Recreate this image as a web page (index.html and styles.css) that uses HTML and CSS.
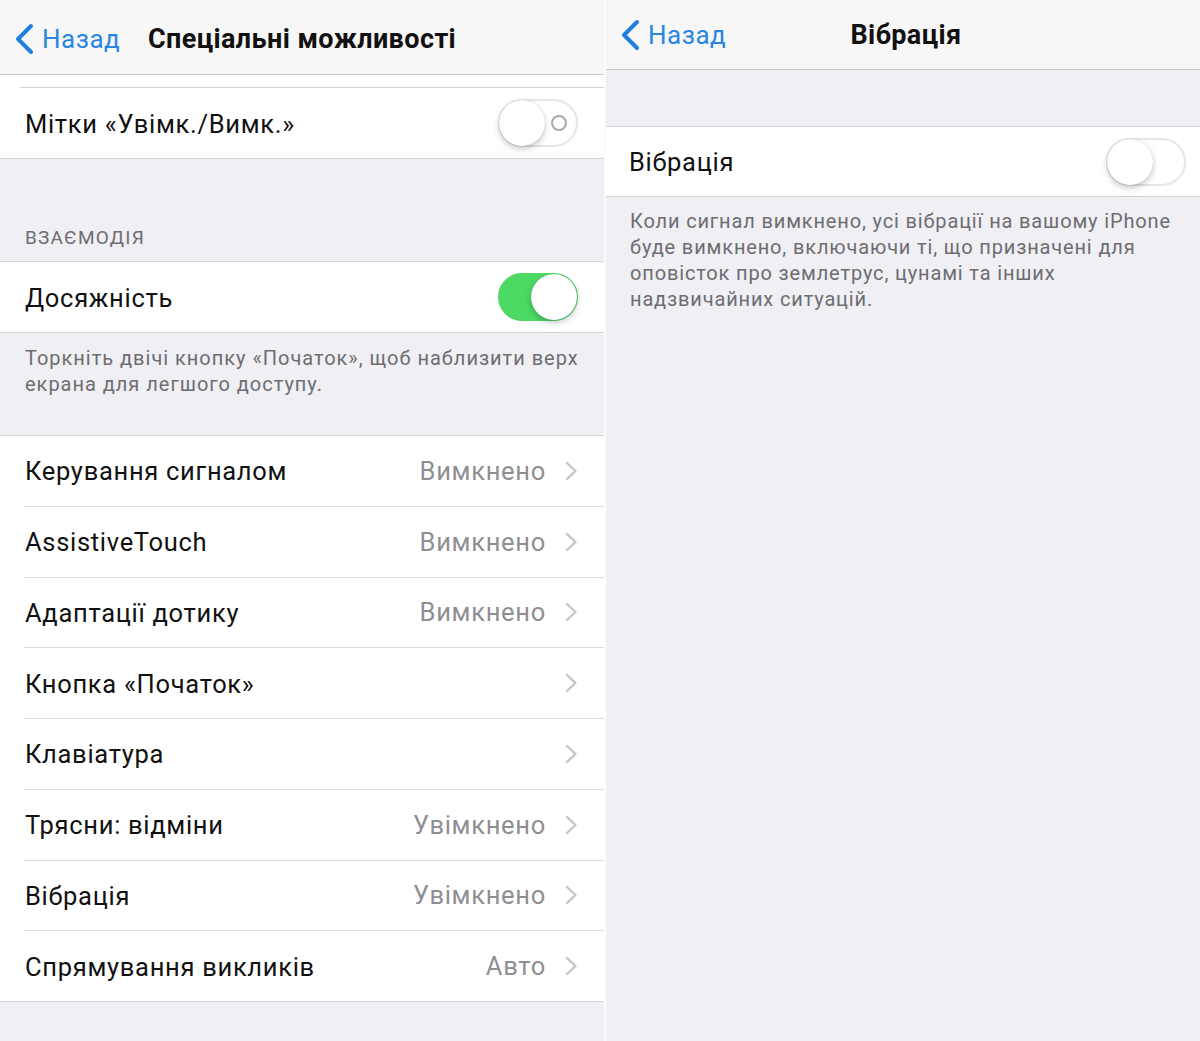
FILE: index.html
```html
<!DOCTYPE html>
<html lang="uk">
<head>
<meta charset="utf-8">
<title>Спеціальні можливості</title>
<link rel="stylesheet" href="styles.css">
</head>
<body>
<div class="screen">
  <section class="panel panel-left">
    <header class="nav nav-left">
      <a class="back">
        <svg class="back-chevron" width="20" height="32" viewBox="0 0 20 32"><path d="M17 3 L4 16 L17 29" fill="none" stroke="#1f7fe0" stroke-width="4" stroke-linecap="round" stroke-linejoin="round"/></svg>
        <span>Назад</span>
      </a>
      <h1 class="title">Спеціальні можливості</h1>
      <span></span>
    </header>

    <div class="group group-top">
      <div class="peek"></div>
      <div class="row">
        <div class="row-body">
          <span class="label">Мітки «Увімк./Вимк.»</span>
          <span class="switch">
            <span class="knob"></span>
            <span class="off-mark"></span>
          </span>
        </div>
      </div>
    </div>

    <div class="section-header">ВЗАЄМОДІЯ</div>

    <div class="group">
      <div class="row">
        <div class="row-body">
          <span class="label">Досяжність</span>
          <span class="switch switch-on"><span class="knob"></span></span>
        </div>
      </div>
    </div>
    <p class="footer footer-left">Торкніть двічі кнопку «Початок», щоб наблизити верх<br>екрана для легшого доступу.</p>

    <div class="group group-list">
      <div class="row"><div class="row-body"><span class="label">Керування сигналом</span><span class="detail"><span class="value">Вимкнено</span><svg class="disclosure" width="13" height="20" viewBox="0 0 13 20"><path d="M2 2 L10.5 10 L2 18" fill="none" stroke="#c4c4c9" stroke-width="2.4" stroke-linecap="round" stroke-linejoin="round"/></svg></span></div></div>
      <div class="row"><div class="row-body"><span class="label">AssistiveTouch</span><span class="detail"><span class="value">Вимкнено</span><svg class="disclosure" width="13" height="20" viewBox="0 0 13 20"><path d="M2 2 L10.5 10 L2 18" fill="none" stroke="#c4c4c9" stroke-width="2.4" stroke-linecap="round" stroke-linejoin="round"/></svg></span></div></div>
      <div class="row"><div class="row-body"><span class="label">Адаптації дотику</span><span class="detail"><span class="value">Вимкнено</span><svg class="disclosure" width="13" height="20" viewBox="0 0 13 20"><path d="M2 2 L10.5 10 L2 18" fill="none" stroke="#c4c4c9" stroke-width="2.4" stroke-linecap="round" stroke-linejoin="round"/></svg></span></div></div>
      <div class="row"><div class="row-body"><span class="label">Кнопка «Початок»</span><span class="detail"><svg class="disclosure" width="13" height="20" viewBox="0 0 13 20"><path d="M2 2 L10.5 10 L2 18" fill="none" stroke="#c4c4c9" stroke-width="2.4" stroke-linecap="round" stroke-linejoin="round"/></svg></span></div></div>
      <div class="row"><div class="row-body"><span class="label">Клавіатура</span><span class="detail"><svg class="disclosure" width="13" height="20" viewBox="0 0 13 20"><path d="M2 2 L10.5 10 L2 18" fill="none" stroke="#c4c4c9" stroke-width="2.4" stroke-linecap="round" stroke-linejoin="round"/></svg></span></div></div>
      <div class="row"><div class="row-body"><span class="label">Трясни: відміни</span><span class="detail"><span class="value">Увімкнено</span><svg class="disclosure" width="13" height="20" viewBox="0 0 13 20"><path d="M2 2 L10.5 10 L2 18" fill="none" stroke="#c4c4c9" stroke-width="2.4" stroke-linecap="round" stroke-linejoin="round"/></svg></span></div></div>
      <div class="row"><div class="row-body"><span class="label">Вібрація</span><span class="detail"><span class="value">Увімкнено</span><svg class="disclosure" width="13" height="20" viewBox="0 0 13 20"><path d="M2 2 L10.5 10 L2 18" fill="none" stroke="#c4c4c9" stroke-width="2.4" stroke-linecap="round" stroke-linejoin="round"/></svg></span></div></div>
      <div class="row"><div class="row-body"><span class="label">Спрямування викликів</span><span class="detail"><span class="value">Авто</span><svg class="disclosure" width="13" height="20" viewBox="0 0 13 20"><path d="M2 2 L10.5 10 L2 18" fill="none" stroke="#c4c4c9" stroke-width="2.4" stroke-linecap="round" stroke-linejoin="round"/></svg></span></div></div>
    </div>
  </section>

  <section class="panel panel-right">
    <header class="nav nav-right">
      <a class="back">
        <svg class="back-chevron" width="20" height="32" viewBox="0 0 20 32"><path d="M17 3 L4 16 L17 29" fill="none" stroke="#1f7fe0" stroke-width="4" stroke-linecap="round" stroke-linejoin="round"/></svg>
        <span>Назад</span>
      </a>
      <h1 class="title">Вібрація</h1>
      <span></span>
    </header>

    <div class="group group-vibe">
      <div class="row">
        <div class="row-body">
          <span class="label">Вібрація</span>
          <span class="switch"><span class="knob"></span></span>
        </div>
      </div>
    </div>
    <p class="footer footer-right">Коли сигнал вимкнено, усі вібрації на вашому iPhone<br>буде вимкнено, включаючи ті, що призначені для<br>оповісток про землетрус, цунамі та інших<br>надзвичайних ситуацій.</p>
  </section>
</div>
</body>
</html>
```

FILE: styles.css
```css
* { box-sizing: border-box; }

html, body {
  margin: 0;
  padding: 0;
  background: #fafafa;
}

body {
  font-family: Roboto, "Liberation Sans", sans-serif;
  color: #111;
  -webkit-font-smoothing: antialiased;
}

.screen {
  display: flex;
  gap: 2px;
  width: 1200px;
  height: 1041px;
  overflow: hidden;
  background: #fbfbfb;
}

.panel {
  background: #efeff4;
  height: 100%;
  display: flex;
  flex-direction: column;
}

.panel-left { width: 604px; flex: none; }
.panel-right { flex: 1; }

/* nav bar */
.nav {
  display: grid;
  grid-template-columns: 1fr auto 1fr;
  align-items: center;
  background: #f7f7f7;
  border-bottom: 1px solid #c9c9cd;
  flex: none;
}

.nav-left { height: 75px; padding-top: 3px; }
.nav-right { height: 70px; }

.back {
  display: flex;
  align-items: center;
  gap: 8px;
  color: #2a86e2;
  font-size: 26px;
  letter-spacing: 0.5px;
  padding-left: 14px;
}

.title {
  margin: 0;
  font-size: 27px;
  font-weight: 700;
  color: #111;
  letter-spacing: 0.4px;
}

.nav-right .title { padding-left: 6px; }

/* groups & rows */
.group {
  background: #fff;
  border-top: 1px solid #d4d4d8;
  border-bottom: 1px solid #d4d4d8;
  flex: none;
}

.group-top {
  border-top: none;
}

.peek {
  height: 13px;
  margin-left: 20px;
  border-bottom: 1px solid #d4d4d8;
}

.row {
  padding-left: 24px;
}

.row-body {
  display: flex;
  align-items: center;
  justify-content: space-between;
  height: 70px;
  padding-right: 26px;
  border-bottom: 1px solid #dcdce0;
}

.row:last-child .row-body { border-bottom: none; }

.group-list .row-body { height: 70.75px; }
.group-list .row:last-child .row-body { height: 69.75px; }

.label {
  font-size: 25.5px;
  letter-spacing: 0.7px;
  color: #111;
  padding-left: 1px;
  padding-top: 1px;
}

.detail {
  display: flex;
  align-items: center;
  gap: 19px;
}

.value {
  font-size: 25.5px;
  letter-spacing: 0.7px;
  color: #8e8e93;
}

.disclosure { display: block; }

/* switch */
.switch {
  position: relative;
  width: 80px;
  height: 48px;
  border-radius: 24px;
  border: 2px solid #e5e5ea;
  background: #fff;
  flex: none;
}

.switch .knob {
  position: absolute;
  top: -1px;
  left: -1px;
  width: 46px;
  height: 46px;
  border-radius: 50%;
  background: #fff;
  box-shadow: 0 3px 6px rgba(0, 0, 0, 0.22), 0 0 1px rgba(0, 0, 0, 0.2);
}

.switch .off-mark {
  position: absolute;
  right: 9px;
  top: 14px;
  width: 16px;
  height: 16px;
  border-radius: 50%;
  border: 2px solid #a8a8ad;
}

.switch-on {
  background: #4cd964;
  border-color: #4cd964;
}

.switch-on .knob {
  left: auto;
  right: -1px;
}

/* headers & footers */
.section-header {
  height: 102px;
  padding: 67px 0 0 25px;
  font-size: 19px;
  color: #6d6d72;
  letter-spacing: 1.2px;
  flex: none;
}

.footer {
  margin: 0;
  font-size: 20px;
  line-height: 26px;
  letter-spacing: 0.85px;
  color: #6d6d72;
  flex: none;
}

.footer-left {
  height: 102px;
  padding: 12px 0 0 25px;
  letter-spacing: 0.98px;
}

.footer-right {
  padding: 11px 0 0 24px;
}

.nav-right + .group {
  margin-top: 56px;
}

.group-vibe .row { padding-left: 22px; }
.group-vibe .row-body { height: 69px; padding-right: 14px; }
```
